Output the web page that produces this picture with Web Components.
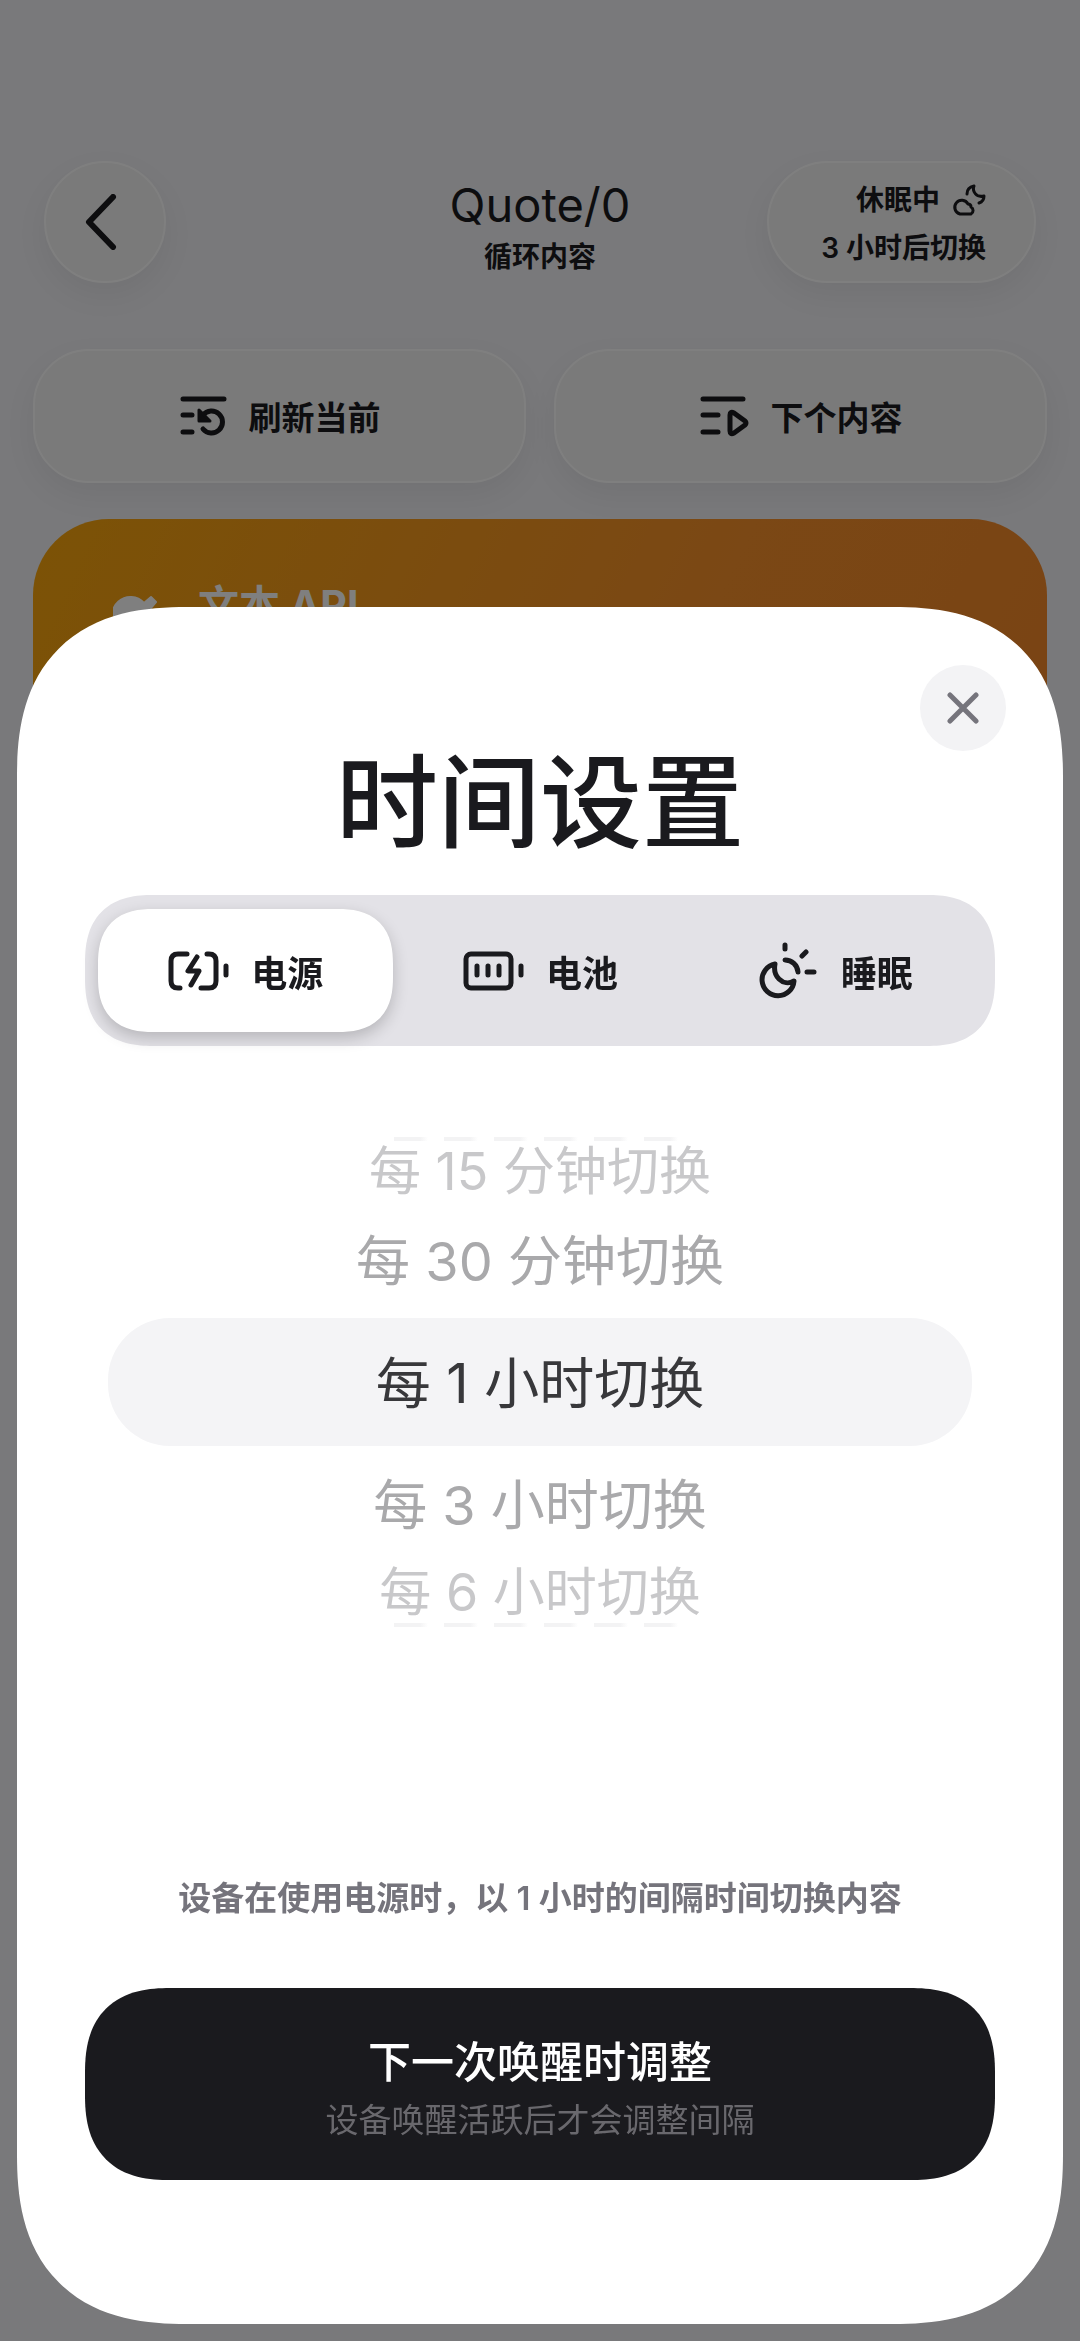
<!DOCTYPE html>
<html lang="zh-CN">
<head>
<meta charset="utf-8">
<meta name="viewport" content="width=device-width, initial-scale=1">
<title>时间设置</title>
<style>
    :root {
        --ink: #1a1a1e;
        --muted: #75747c;
    }

    body {
        margin: 0;
        min-height: 100vh;
        background: #f2f2f6;
        color: var(--ink);
        font-family: Inter, "Noto Sans CJK SC", sans-serif;
    }
</style>
</head>
<body>
<device-page>
    <device-header name="Quote/0" subtitle="循环内容" state="休眠中" next="3 小时后切换"></device-header>
    <action-row>
        <action-button icon="refresh">刷新当前</action-button>
        <action-button icon="next">下个内容</action-button>
    </action-row>
    <content-card>文本 API</content-card>
</device-page>

<bottom-sheet heading="时间设置">
    <mode-tabs></mode-tabs>
    <interval-wheel></interval-wheel>
    <p slot="hint">设备在使用电源时，以 1 小时的间隔时间切换内容</p>
    <confirm-button slot="footer">下一次唤醒时调整<span slot="note">设备唤醒活跃后才会调整间隔</span></confirm-button>
</bottom-sheet>

<script>
const ICONS = {
    back: [36, 56, '<path d="M30 3 6 28 30 53" stroke-width="6"/>'],
    close: [32, 32, '<path d="M3 3 29 29M29 3 3 29"/>'],
    refresh: [48, 44, '<path d="M4 5H45M4 21H13M4 38H13M24 35A11 11 0 1 0 24 21"/><path d="M20 16V27H31Z" fill="currentColor" stroke-width="3"/>'],
    next: [50, 44, '<path d="M4 5H44M4 21H19M4 38H19"/><path d="M31 21V37Q31 41 35 39L46 31Q48 29 46 27L35 19Q31 17 31 21Z"/>'],
    cloudMoon: [34, 34, '<path stroke-width="3" d="M8 31A7 7 0 1 1 16 21C18 21 19 22 19 24A4 4 0 0 1 19 31ZM15 11C15 7 17 4 22 3C20 8 24 15 32 13C32 17 30 19 27 20"/>'],
    power: [62, 42, '<path d="M20 4H11Q4 4 4 11V31Q4 38 11 38H13M40 4H42Q49 4 49 11V31Q49 38 42 38H34M30 7 21 21H32L24 35M59 16V25"/>'],
    battery: [62, 42, '<rect x="4" y="4" width="45" height="34" rx="5"/><path d="M15 16V25M26 16V25M37 16V25M59 16V25"/>'],
    sleep: [62, 62, '<path d="M28 5V9M49 12 45 16M50 32H57M28 20A13 13 0 0 1 41 32M18 24A16 16 0 1 0 37 41C32 44 26 43 22 39S17 29 18 24Z"/>'],
    plug: [48, 44, '<path d="M4 44A17 17 0 0 1 31 20L38 14 43 19 37 26 32 40Z" fill="currentColor" stroke-width="2"/>']
};

function icon(name) {
    const [w, h, body] = ICONS[name];
    return `<svg width="${w}" height="${h}" viewBox="0 0 ${w} ${h}" fill="none" stroke="currentColor" stroke-width="5" stroke-linecap="round" stroke-linejoin="round" aria-hidden="true">${body}</svg>`;
}

const GLASS = `
    background: #f4f4f4;
    border: 2px solid #fff;
    box-shadow: 0 12px 32px rgba(0, 0, 0, 0.06);
    box-sizing: border-box;
    color: inherit;
    font: inherit;
`;

class DevicePage extends HTMLElement {
    constructor() {
        super();
        this.attachShadow({ mode: 'open' });
        this.shadowRoot.innerHTML = `
            <style>
                :host {
                    display: flex;
                    flex-direction: column;
                    padding-top: 161px;
                }
            </style>
            <slot></slot>
        `;
    }
}

class DeviceHeader extends HTMLElement {
    constructor() {
        super();
        this.attachShadow({ mode: 'open' });
        this.shadowRoot.innerHTML = `
            <style>
                :host {
                    display: grid;
                    grid-template-columns: 1fr auto 1fr;
                    align-items: center;
                    padding: 0 44px;
                    margin-bottom: 66px;
                }

                .back, .status {
                    ${GLASS}
                    height: 122px;
                    border-radius: 61px;
                }

                .back {
                    width: 122px;
                    display: grid;
                    place-items: center;
                    padding: 0 8px 0 0;
                }

                .title {
                    padding-top: 14px;
                    text-align: center;
                }

                h1 {
                    margin: 0;
                    font-size: 47px;
                    line-height: 56px;
                    font-weight: 400;
                }

                .sub, .status {
                    font-size: 28px;
                    line-height: 48px;
                    font-weight: 600;
                }

                .sub {
                    margin: 0;
                }

                .status {
                    justify-self: end;
                    display: flex;
                    flex-direction: column;
                    justify-content: center;
                    align-items: flex-end;
                    padding: 4px 48px 0 52px;
                }

                .state {
                    display: flex;
                    align-items: center;
                    gap: 12px;
                }
            </style>
            <button class="back" aria-label="返回">${icon('back')}</button>
            <div class="title">
                <h1></h1>
                <p class="sub"></p>
            </div>
            <div class="status">
                <span class="state"><span class="state-text"></span>${icon('cloudMoon')}</span>
                <span class="next"></span>
            </div>
        `;
    }

    connectedCallback() {
        this.shadowRoot.querySelector('h1').textContent = this.getAttribute('name');
        this.shadowRoot.querySelector('.sub').textContent = this.getAttribute('subtitle');
        this.shadowRoot.querySelector('.state-text').textContent = this.getAttribute('state');
        this.shadowRoot.querySelector('.next').textContent = this.getAttribute('next');
    }
}

class ActionRow extends HTMLElement {
    constructor() {
        super();
        this.attachShadow({ mode: 'open' });
        this.shadowRoot.innerHTML = `
            <style>
                :host {
                    display: grid;
                    grid-template-columns: 1fr 1fr;
                    gap: 28px;
                    padding: 0 33px;
                    margin-bottom: 36px;
                }
            </style>
            <slot></slot>
        `;
    }
}

class ActionButton extends HTMLElement {
    constructor() {
        super();
        this.attachShadow({ mode: 'open' });
        this.shadowRoot.innerHTML = `
            <style>
                :host {
                    display: block;
                }

                button {
                    ${GLASS}
                    width: 100%;
                    height: 134px;
                    border-radius: 56px;
                    display: flex;
                    align-items: center;
                    justify-content: center;
                    gap: 22px;
                    font-size: 33px;
                    font-weight: 600;
                }
            </style>
            <button>${icon(this.getAttribute('icon'))}<slot></slot></button>
        `;
    }
}

class ContentCard extends HTMLElement {
    constructor() {
        super();
        this.attachShadow({ mode: 'open' });
        this.shadowRoot.innerHTML = `
            <style>
                :host {
                    display: flex;
                    align-items: flex-start;
                    gap: 37px;
                    box-sizing: border-box;
                    min-height: 400px;
                    margin: 0 33px;
                    padding: 64px 80px;
                    border-radius: 76px;
                    background: linear-gradient(115deg, #f8a60c, #f6902a 60%, #f48628);
                    color: #fff;
                    font-size: 41px;
                    line-height: 44px;
                    font-weight: 700;
                }
            </style>
            ${icon('plug')}
            <span><slot></slot></span>
        `;
    }
}

class BottomSheet extends HTMLElement {
    constructor() {
        super();
        this.attachShadow({ mode: 'open' });
        this.shadowRoot.innerHTML = `
            <style>
                :host {
                    position: fixed;
                    inset: 0;
                    display: flex;
                    align-items: flex-end;
                    padding: 17px;
                    background: rgba(0, 0, 0, 0.5);
                }

                section {
                    flex: 1;
                    display: flex;
                    flex-direction: column;
                    padding: 58px 68px 144px;
                    border-radius: 142px;
                    background: #fff;
                }

                @supports (corner-shape: superellipse(1.3)) {
                    section {
                        border-radius: 170px;
                        corner-shape: superellipse(1.3);
                    }
                }

                .close {
                    align-self: flex-end;
                    display: grid;
                    place-items: center;
                    width: 86px;
                    height: 86px;
                    margin-right: -11px;
                    padding: 0;
                    border: 0;
                    border-radius: 50%;
                    background: #f3f3f5;
                    color: var(--muted);
                }

                h2 {
                    margin: 6px 0 46px;
                    text-align: center;
                    font-size: 102px;
                    line-height: 92px;
                    font-weight: 500;
                }

                ::slotted(p) {
                    margin: 251px 0 70px;
                    text-align: center;
                    color: var(--muted);
                    font-size: 33px;
                    line-height: 40px;
                    font-weight: 600;
                }
            </style>
            <section role="dialog" aria-labelledby="heading">
                <button class="close" aria-label="关闭">${icon('close')}</button>
                <h2 id="heading"></h2>
                <slot></slot>
                <slot name="hint"></slot>
                <slot name="footer"></slot>
            </section>
        `;
    }

    connectedCallback() {
        this.shadowRoot.querySelector('h2').textContent = this.getAttribute('heading');
        this.shadowRoot.querySelector('.close').addEventListener('click', () => this.remove());
    }
}

class ModeTabs extends HTMLElement {
    constructor() {
        super();
        this.attachShadow({ mode: 'open' });
        this.shadowRoot.innerHTML = `
            <style>
                :host {
                    display: grid;
                    grid-template-columns: repeat(3, 1fr);
                    padding: 14px 13px;
                    border-radius: 58px;
                    background: #e3e2e7;
                }

                button {
                    display: flex;
                    align-items: center;
                    justify-content: center;
                    gap: 22px;
                    height: 123px;
                    padding: 0;
                    border: 0;
                    border-radius: 46px;
                    background: none;
                    color: inherit;
                    font: inherit;
                    font-size: 36px;
                    font-weight: 600;
                }

                button[aria-selected="true"] {
                    background: #fff;
                    box-shadow: 0 6px 16px rgba(0, 0, 0, 0.2);
                }

                @supports (corner-shape: superellipse(1.3)) {
                    :host {
                        border-radius: 68px;
                        corner-shape: superellipse(1.3);
                    }

                    button {
                        border-radius: 55px;
                        corner-shape: superellipse(1.3);
                    }
                }
            </style>
            <button role="tab" aria-selected="true">${icon('power')}电源</button>
            <button role="tab" aria-selected="false">${icon('battery')}电池</button>
            <button role="tab" aria-selected="false">${icon('sleep')}睡眠</button>
        `;
        this.setAttribute('role', 'tablist');
        this.tabs = this.shadowRoot.querySelectorAll('button');
        this.tabs.forEach(tab => tab.addEventListener('click', () => this.select(tab)));
    }

    select(tab) {
        this.tabs.forEach(t => t.setAttribute('aria-selected', t === tab));
    }
}

class IntervalWheel extends HTMLElement {
    constructor() {
        super();
        this.attachShadow({ mode: 'open' });
        this.shadowRoot.innerHTML = `
            <style>
                :host {
                    display: grid;
                    grid-template-rows: 4px 61px 116px 128px 116px 61px 4px;
                    margin: 91px 23px 0;
                    text-align: center;
                }

                label {
                    display: grid;
                    place-items: center;
                    box-sizing: border-box;
                    padding-bottom: 6px;
                    font-size: 54px;
                    color: #a9a9ab;
                }

                input {
                    position: absolute;
                    opacity: 0;
                    pointer-events: none;
                }

                .picked {
                    border-radius: 62px;
                    background: #f4f4f6;
                    color: #38383b;
                    font-size: 55px;
                }

                .far {
                    padding: 0;
                    font-size: 52px;
                    line-height: 60px;
                    color: #c8c8ca;
                }

                /* rows that have turned out of sight */
                .edge {
                    justify-self: center;
                    width: 292px;
                    background: repeating-linear-gradient(90deg, #f3f3f4 0 26px, #fff 34px 50px);
                }
            </style>
            <div class="edge"></div>
            <label class="far"><input type="radio" name="interval"><span>每 15 分钟切换</span></label>
            <label><input type="radio" name="interval"><span>每 30 分钟切换</span></label>
            <label class="picked"><input type="radio" name="interval" checked><span>每 1 小时切换</span></label>
            <label><input type="radio" name="interval"><span>每 3 小时切换</span></label>
            <label class="far"><input type="radio" name="interval"><span>每 6 小时切换</span></label>
            <div class="edge"></div>
        `;
    }
}

class ConfirmButton extends HTMLElement {
    constructor() {
        super();
        this.attachShadow({ mode: 'open' });
        this.shadowRoot.innerHTML = `
            <style>
                :host {
                    display: block;
                }

                button {
                    display: flex;
                    flex-direction: column;
                    align-items: center;
                    justify-content: center;
                    width: 100%;
                    height: 192px;
                    padding: 10px 0 0;
                    border: 0;
                    border-radius: 72px;
                    background: var(--ink);
                    color: #fff;
                    font: inherit;
                    font-size: 43px;
                    line-height: 62px;
                    font-weight: 500;
                }

                small {
                    color: #69686d;
                    font-size: 33px;
                    line-height: 54px;
                    font-weight: 400;
                }

                @supports (corner-shape: superellipse(1.3)) {
                    button {
                        border-radius: 85px;
                        corner-shape: superellipse(1.3);
                    }
                }
            </style>
            <button>
                <span><slot></slot></span>
                <small><slot name="note"></slot></small>
            </button>
        `;
    }
}

customElements.define('device-page', DevicePage);
customElements.define('device-header', DeviceHeader);
customElements.define('action-row', ActionRow);
customElements.define('action-button', ActionButton);
customElements.define('content-card', ContentCard);
customElements.define('bottom-sheet', BottomSheet);
customElements.define('mode-tabs', ModeTabs);
customElements.define('interval-wheel', IntervalWheel);
customElements.define('confirm-button', ConfirmButton);
</script>
</body>
</html>
